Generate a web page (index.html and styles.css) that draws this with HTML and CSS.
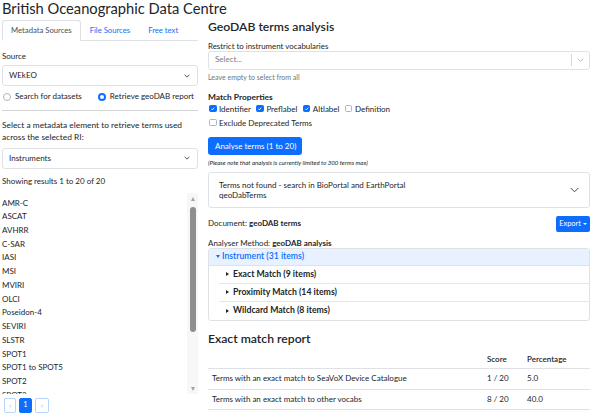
FILE: index.html
```html
<!DOCTYPE html>
<html lang="en">
<head>
    <meta charset="UTF-8">
    <meta name="viewport" content="width=device-width, initial-scale=1.0">
    <title>GeoDAB terms analysis</title>
    <link rel="stylesheet" href="styles.css">
</head>
<body>
    <h1 class="site-title">British Oceanographic Data Centre</h1>
    <div class="layout">
        <div class="sidebar">
            <ul class="tabs">
                <li class="tab active">Metadata Sources</li>
                <li class="tab">File Sources</li>
                <li class="tab">Free text</li>
            </ul>
            <div class="field-label">Source</div>
            <div class="select">
                <span>WEkEO</span>
                <svg class="select-caret" width="6" height="4" viewBox="0 0 6 4"><path d="M0.6 0.8 3 3.1 5.4 0.8" fill="none" stroke="#444" stroke-width="0.9"/></svg>
            </div>
            <div class="radios">
                <label class="radio"><span class="radio-mark"></span>Search for datasets</label>
                <label class="radio"><span class="radio-mark checked"></span>Retrieve geoDAB report</label>
            </div>
            <hr class="divider">
            <p class="help-text">Select a metadata element to retrieve terms used across the selected RI:</p>
            <div class="select select-short">
                <span>Instruments</span>
                <svg class="select-caret" width="6" height="4" viewBox="0 0 6 4"><path d="M0.6 0.8 3 3.1 5.4 0.8" fill="none" stroke="#444" stroke-width="0.9"/></svg>
            </div>
            <p class="results">Showing results 1 to 20 of 20</p>
            <div class="term-box">
                <ul class="term-list">
                    <li>AMR-C</li>
                    <li>ASCAT</li>
                    <li>AVHRR</li>
                    <li>C-SAR</li>
                    <li>IASI</li>
                    <li>MSI</li>
                    <li>MVIRI</li>
                    <li>OLCI</li>
                    <li>Poseidon-4</li>
                    <li>SEVIRI</li>
                    <li>SLSTR</li>
                    <li>SPOT1</li>
                    <li>SPOT1 to SPOT5</li>
                    <li>SPOT2</li>
                    <li>SPOT3</li>
                </ul>
                <div class="scrollbar">
                    <span class="scroll-arrow up"></span>
                    <span class="scroll-thumb"></span>
                    <span class="scroll-arrow down"></span>
                </div>
            </div>
            <div class="pager">
                <span class="page-btn prev">&lsaquo;</span>
                <span class="page-btn current">1</span>
                <span class="page-btn next">&rsaquo;</span>
            </div>
        </div>

        <div class="main">
            <h2 class="section-title">GeoDAB terms analysis</h2>
            <div class="restrict-label">Restrict to instrument vocabularies</div>
            <div class="multi-select">
                <span class="placeholder">Select...</span>
                <span class="indicator-sep"></span>
                <svg class="indicator" width="7" height="4" viewBox="0 0 7 4"><path d="M0.7 0.8 3.5 3.2 6.3 0.8" fill="none" stroke="#b5b5b5" stroke-width="0.9"/></svg>
            </div>
            <div class="hint">Leave empty to select from all</div>
            <div class="group-title">Match Properties</div>
            <div class="checks">
                <label class="check"><span class="box on"><svg viewBox="0 0 8 8"><path d="M1.8 4.1 3.3 5.6 6.2 2.5" fill="none" stroke="#fff" stroke-width="1.2"/></svg></span>Identifier</label>
                <label class="check"><span class="box on"><svg viewBox="0 0 8 8"><path d="M1.8 4.1 3.3 5.6 6.2 2.5" fill="none" stroke="#fff" stroke-width="1.2"/></svg></span>Preflabel</label>
                <label class="check"><span class="box on"><svg viewBox="0 0 8 8"><path d="M1.8 4.1 3.3 5.6 6.2 2.5" fill="none" stroke="#fff" stroke-width="1.2"/></svg></span>Altlabel</label>
                <label class="check"><span class="box"></span>Definition</label>
            </div>
            <div class="checks">
                <label class="check"><span class="box"></span>Exclude Deprecated Terms</label>
            </div>
            <button class="btn-primary">Analyse terms (1 to 20)</button>
            <p class="note">(Please note that analysis is currently limited to 300 terms max)</p>
            <div class="accordion">
                <div class="accordion-text">Terms not found - search in BioPortal and EarthPortal<br>qeoDabTerms</div>
                <svg class="accordion-chevron" width="9" height="6" viewBox="0 0 9 6"><path d="M0.6 0.9 4.5 4.8 8.4 0.9" fill="none" stroke="#333" stroke-width="0.9"/></svg>
            </div>
            <div class="doc-row">
                <span>Document: <b>geoDAB terms</b></span>
                <button class="btn-export">Export<span class="caret"></span></button>
            </div>
            <div class="method">Analyser Method: <b>geoDAB analysis</b></div>
            <div class="tree">
                <div class="tree-head"><span class="tri-down"></span>Instrument (31 items)</div>
                <ul class="tree-children">
                    <li><span class="tri-right"></span>Exact Match (9 items)</li>
                    <li><span class="tri-right"></span>Proximity Match (14 items)</li>
                    <li><span class="tri-right"></span>Wildcard Match (8 items)</li>
                </ul>
            </div>
            <h2 class="section-title report-title">Exact match report</h2>
            <table class="report">
                <thead>
                    <tr><th></th><th class="col-score">Score</th><th class="col-pct">Percentage</th></tr>
                </thead>
                <tbody>
                    <tr><td>Terms with an exact match to SeaVoX Device Catalogue</td><td>1 / 20</td><td>5.0</td></tr>
                    <tr><td>Terms with an exact match to other vocabs</td><td>8 / 20</td><td>40.0</td></tr>
                </tbody>
            </table>
        </div>
    </div>
</body>
</html>
```

FILE: styles.css
```css
* {
    box-sizing: border-box;
}
body {
    margin: 0;
    font-family: "Lato", "Noto Sans", sans-serif;
    font-size: 8px;
    line-height: 1.4;
    color: #212529;
    background: #fff;
    overflow: hidden;
}
.site-title {
    margin: 0;
    padding-left: 2px;
    height: 20px;
    font-size: 14.7px;
    font-weight: 400;
    line-height: 16px;
}
.layout {
    display: grid;
    grid-template-columns: 196px 382px;
    column-gap: 10px;
    padding-left: 2px;
}

/* left side */
.tabs {
    display: flex;
    height: 21px;
    margin: 0;
    padding: 0;
    list-style: none;
    border-bottom: 1px solid #dee2e6;
}
.tab {
    height: 21px;
    padding: 0 8px;
    font-size: 7.7px;
    line-height: 19px;
    color: #0d6efd;
    border: 1px solid transparent;
    border-radius: 3px 3px 0 0;
}
.tab.active {
    color: #495057;
    background: #fff;
    border-color: #dee2e6 #dee2e6 #fff;
}
.field-label {
    margin-top: 8px;
    line-height: 14px;
}
.select {
    display: flex;
    justify-content: space-between;
    align-items: center;
    height: 21px;
    margin-top: 2px;
    padding: 0 7px 0 6px;
    border: 1px solid #dee2e6;
    border-radius: 3px;
}
.select-short {
    margin-top: 5px;
    height: 20.5px;
}
.radios {
    display: flex;
    gap: 16px;
    margin-top: 3px;
    padding-left: 1px;
    line-height: 15px;
    white-space: nowrap;
}
.radio {
    display: flex;
    flex-shrink: 0;
    align-items: center;
    gap: 4px;
}
.radio-mark {
    width: 8px;
    height: 8px;
    border: 1px solid #adb5bd;
    border-radius: 50%;
    background: #fff;
}
.radio-mark.checked {
    border: 2.5px solid #0d6efd;
}
.divider {
    height: 0;
    margin: 6px 0 0;
    border: 0;
    border-top: 1px solid #d5d6d7;
}
.help-text {
    margin: 8px 0 0;
    font-size: 8.4px;
    line-height: 12px;
}
.results {
    margin: 6px 0 0;
    line-height: 13px;
}
.term-box {
    display: flex;
    height: 201px;
    margin-top: 5px;
}
.term-list {
    flex: 1;
    margin: 0;
    padding: 4px 0 0;
    list-style: none;
    overflow: hidden;
    line-height: 13.73px;
}
.scrollbar {
    display: flex;
    flex-direction: column;
    align-items: center;
    width: 11px;
    padding: 4px 0 3px;
    background: #f7f7f7;
}
.scroll-arrow {
    width: 0;
    height: 0;
    border-left: 2.5px solid transparent;
    border-right: 2.5px solid transparent;
}
.scroll-arrow.up {
    border-bottom: 4px solid #a3a3a3;
}
.scroll-arrow.down {
    margin-top: auto;
    border-top: 4px solid #a3a3a3;
}
.scroll-thumb {
    width: 6px;
    height: 125px;
    margin-top: 6px;
    background: #8e8e8e;
    border-radius: 3px;
}
.pager {
    display: flex;
    gap: 3px;
    margin-top: 4px;
    padding-left: 2px;
}
.page-btn {
    display: flex;
    justify-content: center;
    align-items: center;
    width: 13px;
    height: 15px;
    font-size: 8px;
    line-height: 1;
    color: #8fb8f6;
    border: 1px solid #b6d4fe;
    border-radius: 2px;
}
.page-btn.prev {
    width: 12px;
}
.page-btn.next {
    width: 14px;
}
.page-btn.current {
    color: #fff;
    background: #0d6efd;
    border-color: #0d6efd;
    font-size: 7.5px;
}

/* right side */
.section-title {
    margin: 0;
    font-size: 12.2px;
    font-weight: 600;
    line-height: 14px;
}
.restrict-label {
    margin-top: 8px;
    font-size: 7.9px;
    line-height: 8.5px;
}
.multi-select {
    display: flex;
    align-items: center;
    height: 19px;
    padding-left: 6px;
    border: 1px solid #dee2e6;
    border-radius: 3px;
}
.placeholder {
    flex: 1;
    color: #7d7d7d;
}
.indicator-sep {
    width: 1px;
    height: 12px;
    background: #d6d6d6;
}
.indicator {
    margin: 0 5px;
}
.hint {
    margin-top: 2px;
    font-size: 7px;
    line-height: 11px;
    color: #6c757d;
}
.group-title {
    margin-top: 8px;
    font-size: 8.4px;
    font-weight: 700;
    line-height: 12px;
}
.checks {
    display: flex;
    gap: 5.5px;
    padding-left: 1px;
    line-height: 12px;
}
.checks + .checks {
    margin-top: 2px;
}
.check {
    display: flex;
    align-items: center;
    gap: 2.5px;
}
.box {
    display: flex;
    width: 7.5px;
    height: 7.5px;
    background: #fff;
    border: 1px solid #adb5bd;
    border-radius: 1.5px;
}
.box.on {
    background: #0d6efd;
    border-color: #0d6efd;
}
.box svg {
    width: 100%;
    height: 100%;
}
.btn-primary {
    display: block;
    height: 18px;
    margin-top: 8px;
    padding: 0 6px 0 7px;
    font-family: inherit;
    font-size: 8px;
    line-height: 18px;
    color: #fff;
    background: #0d6efd;
    border: 0;
    border-radius: 3px;
}
.note {
    margin: 3px 0 0;
    font-size: 6.1px;
    font-style: italic;
    line-height: 9px;
}
.accordion {
    display: flex;
    justify-content: space-between;
    align-items: center;
    margin-top: 5px;
    padding: 7.5px 10px 6.5px;
    line-height: 10px;
    border: 1px solid #dee2e6;
    border-radius: 3px;
}
.doc-row {
    display: flex;
    justify-content: space-between;
    align-items: center;
    height: 16px;
    margin-top: 8px;
}
.btn-export {
    display: flex;
    justify-content: center;
    align-items: center;
    gap: 2px;
    width: 34px;
    height: 16px;
    padding: 0;
    font-family: inherit;
    font-size: 7.4px;
    color: #fff;
    background: #0d6efd;
    border: 0;
    border-radius: 2px;
}
.caret {
    width: 0;
    height: 0;
    border-left: 2px solid transparent;
    border-right: 2px solid transparent;
    border-top: 2.5px solid #fff;
}
.method {
    margin-top: 6px;
    line-height: 10px;
}
.tree {
    font-size: 8.7px;
    border: 1px solid #dee2e6;
    border-radius: 3px;
    overflow: hidden;
}
.tree-head {
    display: flex;
    align-items: center;
    gap: 2px;
    height: 17px;
    padding-left: 7px;
    font-weight: 600;
    color: #0d6efd;
    background: #e7f1ff;
    border-bottom: 1px solid #dee2e6;
}
.tri-down {
    width: 0;
    height: 0;
    border-left: 2.5px solid transparent;
    border-right: 2.5px solid transparent;
    border-top: 3px solid #0d6efd;
}
.tree-children {
    margin: 0 0 0 10px;
    padding: 0;
    list-style: none;
}
.tree-children li {
    display: flex;
    align-items: center;
    gap: 4px;
    height: 18px;
    padding-left: 7px;
    font-weight: 700;
    border-bottom: 1px solid #e5e7e9;
}
.tree-children li:last-child {
    border-bottom: 0;
}
.tri-right {
    width: 0;
    height: 0;
    border-top: 2.5px solid transparent;
    border-bottom: 2.5px solid transparent;
    border-left: 3px solid #212529;
}
.report-title {
    margin-top: 10px;
    line-height: 16px;
}
.report {
    width: 100%;
    margin-top: 4px;
    border-collapse: collapse;
}
.report th,
.report td {
    padding: 0 4px;
    text-align: left;
    border-bottom: 1px solid #dee2e6;
}
.report th {
    height: 18px;
    font-weight: 600;
}
.report td {
    height: 20.5px;
}
.col-score {
    width: 40px;
}
.col-pct {
    width: 67px;
}
```
